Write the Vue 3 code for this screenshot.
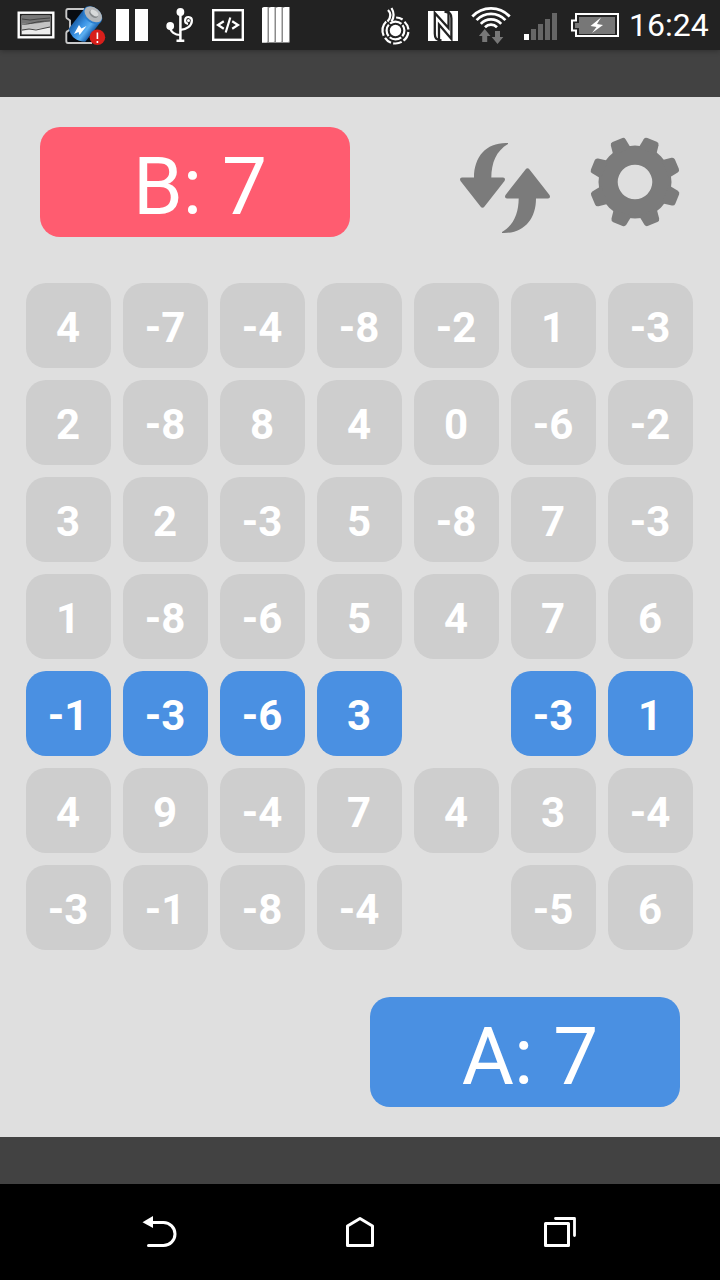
<script setup>
import { ref } from 'vue'

const scores = ref({ a: 7, b: 7 })
const activeRow = ref(4)

// null = already taken
const board = ref([
  [4, -7, -4, -8, -2, 1, -3],
  [2, -8, 8, 4, 0, -6, -2],
  [3, 2, -3, 5, -8, 7, -3],
  [1, -8, -6, 5, 4, 7, 6],
  [-1, -3, -6, 3, null, -3, 1],
  [4, 9, -4, 7, 4, 3, -4],
  [-3, -1, -8, -4, null, -5, 6],
])
</script>

<template>
  <div class="phone">
    <header class="status-bar">
      <div class="status-group">
        <!-- picture -->
        <svg class="status-icon" viewBox="12 0 48 50">
          <rect x="17.5" y="11.5" width="37" height="27" fill="#fff" />
          <rect x="20.7" y="14.7" width="30.6" height="20.6" fill="#c4c4c4" stroke="#222" stroke-width="1.6" />
          <path d="M22 16h28v5l-10 2-10 1-8-1z" fill="#777" />
          <path d="M22 31l9-1.500 19-2V34H22z" fill="#eee" />
          <path d="M22 19l8 1 8-1 12-1M22 24c9 1 11-3 28-3M22 30l7-1 7 1 14-3" fill="none" stroke="#444" />
        </svg>
        <!-- battery doctor -->
        <svg class="status-icon" viewBox="60 0 48 50">
          <defs>
            <linearGradient id="cell" x1="0" y1="0" x2="1" y2="0">
              <stop offset="0" stop-color="#1d62ab" />
              <stop offset="0.4" stop-color="#3a92e4" />
              <stop offset="0.7" stop-color="#5cb0f2" />
              <stop offset="1" stop-color="#1a62b0" />
            </linearGradient>
          </defs>
          <path d="M84 9H68q-1.700 0-1.700 2v6q0 1.500 1.700 2l2 1.500v9l-2 1.500q-1.700.5-1.700 2v8q0 2 1.700 2h24" fill="#080b10" stroke="#c8c8c8" stroke-width="1.900" />
          <g transform="rotate(38 85 25)">
            <path d="M74.500 13v25q10.500 8 21 0V13z" fill="url(#cell)" />
            <ellipse cx="85" cy="12.500" rx="10.700" ry="7.500" fill="#2b7fd0" />
            <ellipse cx="85" cy="11.500" rx="9.800" ry="6.600" fill="#b3b6b9" />
            <ellipse cx="85" cy="11" rx="5" ry="3.200" fill="#85898c" />
            <ellipse cx="85" cy="9.800" rx="4.500" ry="2.500" fill="#d7d9da" />
          </g>
          <path d="M79 25l-5 9 4.500-2 1 3 7-9-5 2.500z" fill="#fff" />
          <circle cx="97.400" cy="37.200" r="7.800" fill="#d81f1b" />
          <path d="M97.400 32.500v6.500M97.400 41v2" stroke="#fff" stroke-width="1.600" />
        </svg>
        <!-- pause -->
        <svg class="status-icon" viewBox="108 0 48 50">
          <path d="M116 9h13v32h-13zM135 9h13v32h-13z" fill="#fff" />
        </svg>
        <!-- usb -->
        <svg class="status-icon" viewBox="156 0 48 50">
          <circle cx="180.400" cy="12" r="3.900" fill="#fff" />
          <circle cx="170.200" cy="26" r="3.900" fill="#fff" />
          <path d="M180.400 12v29M176.500 40.800h7.800" fill="none" stroke="#fff" stroke-width="2.500" />
          <path d="M170.200 27c0 5 5 8 10 8M180.400 29.800c6 0 11.500-4 11.500-9.300a3.400 3.400 0 1 0-3.800 3.300" fill="none" stroke="#fff" stroke-width="2.200" />
          <circle cx="188.500" cy="20.500" r="1.500" fill="#fff" />
        </svg>
        <!-- developer -->
        <svg class="status-icon" viewBox="204 0 48 50">
          <rect x="213.200" y="10.200" width="29.600" height="29.600" fill="none" stroke="#fff" stroke-width="2.400" />
          <path d="M223.800 21.300l-5.800 3.700 5.800 3.700M232.200 21.300l5.800 3.700-5.800 3.700M230.300 17.500l-4.600 15" fill="none" stroke="#fff" stroke-width="2.200" />
        </svg>
        <!-- strips -->
        <svg class="status-icon" viewBox="252 0 48 50">
          <path d="M262 8l2-1h26v35l-1 1h-27z" fill="#8b8b8b" />
          <path d="M262 8l2-1h3.500v34.500l-1 1H262zM269 8l2-1h3.500v34.500l-1 .5H269zM276 8l2-1h3.500v34.500l-1 .5H276zM283 8l2-1h4v34.500l-1 .5h-5z" fill="#fff" />
        </svg>
      </div>

      <div class="status-group">
        <!-- beats -->
        <svg class="status-icon" viewBox="372 0 48 50">
          <circle cx="395.500" cy="30.500" r="5.700" fill="#fff" />
          <g fill="none" stroke="#fff" stroke-width="2.200">
            <circle cx="395.500" cy="30.500" r="8.900" stroke-dasharray="12.380 1.600" stroke-dashoffset="-7.800" />
            <path d="M386.200 21.500a13 13 0 0 0-2.500 14.200M385 37.800a13 13 0 0 0 6 4.900M393.200 43.300a13 13 0 0 0 8.500-1.400M403.500 40.700a13 13 0 0 0 4.900-8.700M408.500 29.500a13 13 0 0 0-4-7.700M402.600 19.500a13 13 0 0 0-6.500-2" />
            <path d="M388 10c3.500 3.500 3 7.500-.5 11.500M391.500 8c3 5 2.500 9.500 0 13.500" />
          </g>
        </svg>
        <!-- nfc -->
        <svg class="status-icon" viewBox="420 0 48 50">
          <rect x="428" y="11" width="30" height="30" fill="#fff" />
          <g fill="none" stroke="#222" stroke-width="2.300">
            <path d="M441.500 40.500c-5.500-.7-6.700-2.500-6.700-7V13l13.700 15V11" />
            <path d="M444.500 11.500c5.500.7 6.900 2.500 6.900 7V39L439 24.500V41" />
          </g>
        </svg>
        <!-- wifi -->
        <svg class="status-icon" viewBox="468 0 48 50">
          <g fill="none" stroke="#fff" stroke-width="2.700">
            <path d="M472.300 16.500a25.500 25.500 0 0 1 37.400 0M476.600 20.200a19.700 19.700 0 0 1 28.800 0M480.800 23.800a14 14 0 0 1 20.400 0M485 27.200a8.500 8.500 0 0 1 12 0" />
          </g>
          <path d="M484.700 29l5.800 7h-3.300v6h-5v-6h-3.300zM497.500 44l-5.800-7h3.300v-6h5v6h3.300z" fill="#777" />
        </svg>
        <!-- signal -->
        <svg class="status-icon" viewBox="516 0 48 50">
          <path d="M524 34h5v6h-5z" fill="#fff" />
          <path d="M531 29h5v11h-5zM538 24h5v16h-5zM545 19h5v21h-5zM552 13h5v27h-5z" fill="#666" />
        </svg>
        <!-- battery -->
        <svg class="status-icon wide" viewBox="564 0 60 50">
          <path d="M576 14h42v22h-42v-5.500h-4v-10h4z" fill="none" stroke="#fff" stroke-width="2" />
          <path d="M579 17h36v17h-36v-6h-4v-5h4z" fill="#777" />
          <path d="M601 17.500l-10.500 8.500 6 1-4.500 6 11-8-6-1z" fill="#fff" />
        </svg>
        <span class="clock">16:24</span>
      </div>
    </header>

    <main class="game">
      <div class="top-row">
        <div class="score score-b">B: {{ scores.b }}</div>
        <div class="actions">
          <svg class="refresh" viewBox="460 142 90 92" fill="#7b7b7b">
            <path d="M508 143C487 142 474 156 474 177.500H462Q459 178 460.500 181L480.500 206.500Q482.500 209 484.500 206.500L504.500 181Q506 178 503 177.500H491.300C491.500 163 496 151 508 144Z" />
            <path d="M508 143C487 142 474 156 474 177.500H462Q459 178 460.500 181L480.500 206.500Q482.500 209 484.500 206.500L504.500 181Q506 178 503 177.500H491.300C491.500 163 496 151 508 144Z" transform="rotate(180 505 188)" />
          </svg>
          <svg class="gear" viewBox="-45 -45 90 90" fill="#7b7b7b">
            <path fill-rule="evenodd" d="M0-36.500a36.500 36.500 0 1 0 0 73a36.500 36.500 0 1 0 0-73zM0-17.300a17.300 17.300 0 1 1 0 34.600a17.300 17.300 0 1 1 0-34.600z" />
            <path
              v-for="n in 8"
              :key="n"
              d="M-9.500-33L-8-43Q-7.500-45.500-5-45.500H5Q7.500-45.500 8-43L9.500-33z"
              :transform="`rotate(${n * 45 + 22})`"
            />
          </svg>
        </div>
      </div>

      <div class="board">
        <template v-for="(row, r) in board" :key="r">
          <div
            v-for="(value, c) in row"
            :key="c"
            class="tile"
            :class="{ active: r === activeRow, empty: value === null }"
          >{{ value }}</div>
        </template>
      </div>

      <div class="score score-a">A: {{ scores.a }}</div>
    </main>

    <nav class="nav-bar">
      <svg class="nav-icon" viewBox="140 1212 40 40">
        <path d="M152 1222.500h11.500a11.500 11.500 0 0 1 0 23h-15" fill="none" stroke="#fff" stroke-width="3" stroke-linecap="round" />
        <path d="M142.500 1222.300l10.500-6.300v12z" fill="#fff" />
      </svg>
      <svg class="nav-icon" viewBox="340 1212 40 40">
        <path d="M347.500 1245.500v-19.500l12.500-7.500 12.500 7.500v19.500z" fill="none" stroke="#fff" stroke-width="3" stroke-linejoin="round" />
      </svg>
      <svg class="nav-icon" viewBox="540 1212 40 40">
        <g fill="none" stroke="#fff" stroke-width="3" stroke-linejoin="round">
          <rect x="545.500" y="1223.500" width="23" height="22" />
          <path d="M555.500 1218.500h19v17" stroke-linecap="round" stroke-width="2.800" />
        </g>
      </svg>
    </nav>
  </div>
</template>

<style>
body {
  margin: 0;
  background: #000;
}
</style>

<style scoped>
.phone {
  display: flex;
  flex-direction: column;
  width: 720px;
  height: 1280px;
  overflow: hidden;
  background: #424242;
  font-family: Roboto, 'Liberation Sans', sans-serif;
  color: #fff;
}

.status-bar {
  display: flex;
  justify-content: space-between;
  height: 50px;
  padding: 0 11px 0 12px;
  background: #222;
  box-shadow: 0 1px 5px rgba(0, 0, 0, 0.3);
}

.status-group {
  display: flex;
  align-items: center;
}

.status-icon {
  display: block;
  width: 48px;
  height: 50px;
}

.status-icon.wide {
  width: 60px;
}

.clock {
  width: 80px;
  margin-left: 5px;
  font-size: 32px;
  line-height: 52px;
  white-space: nowrap;
}

.game {
  display: flex;
  flex-direction: column;
  box-sizing: border-box;
  height: 1040px;
  margin-top: 47px;
  padding: 30px 40px;
  background: #dfdfdf;
}

.top-row {
  display: flex;
  justify-content: space-between;
  align-items: center;
}

.score {
  box-sizing: border-box;
  width: 310px;
  height: 110px;
  padding-left: 10px;
  border-radius: 20px;
  font-size: 80px;
  line-height: 120px;
  text-align: center;
}

.score-b {
  background: #ff5c70;
}

.score-a {
  align-self: flex-end;
  background: #4a90e2;
}

.actions {
  display: flex;
  align-items: center;
  gap: 40px;
}

.refresh {
  width: 90px;
  height: 92px;
  margin-top: 12px;
}

.gear {
  width: 90px;
  height: 90px;
  overflow: visible;
}

.board {
  display: grid;
  grid-template-columns: repeat(7, 85px);
  grid-auto-rows: 85px;
  gap: 12px;
  margin: 46px -14px 47px;
}

.tile {
  box-sizing: border-box;
  padding-right: 1px;
  border-radius: 20px;
  background: #cecece;
  font-size: 42px;
  font-weight: 700;
  line-height: 89px;
  text-align: center;
}

.tile.active {
  background: #4a90e2;
}

.tile.empty {
  visibility: hidden;
}

.nav-bar {
  display: flex;
  justify-content: center;
  align-items: center;
  gap: 160px;
  height: 96px;
  margin-top: 47px;
  background: #000;
}

.nav-icon {
  width: 40px;
  height: 40px;
}
</style>
